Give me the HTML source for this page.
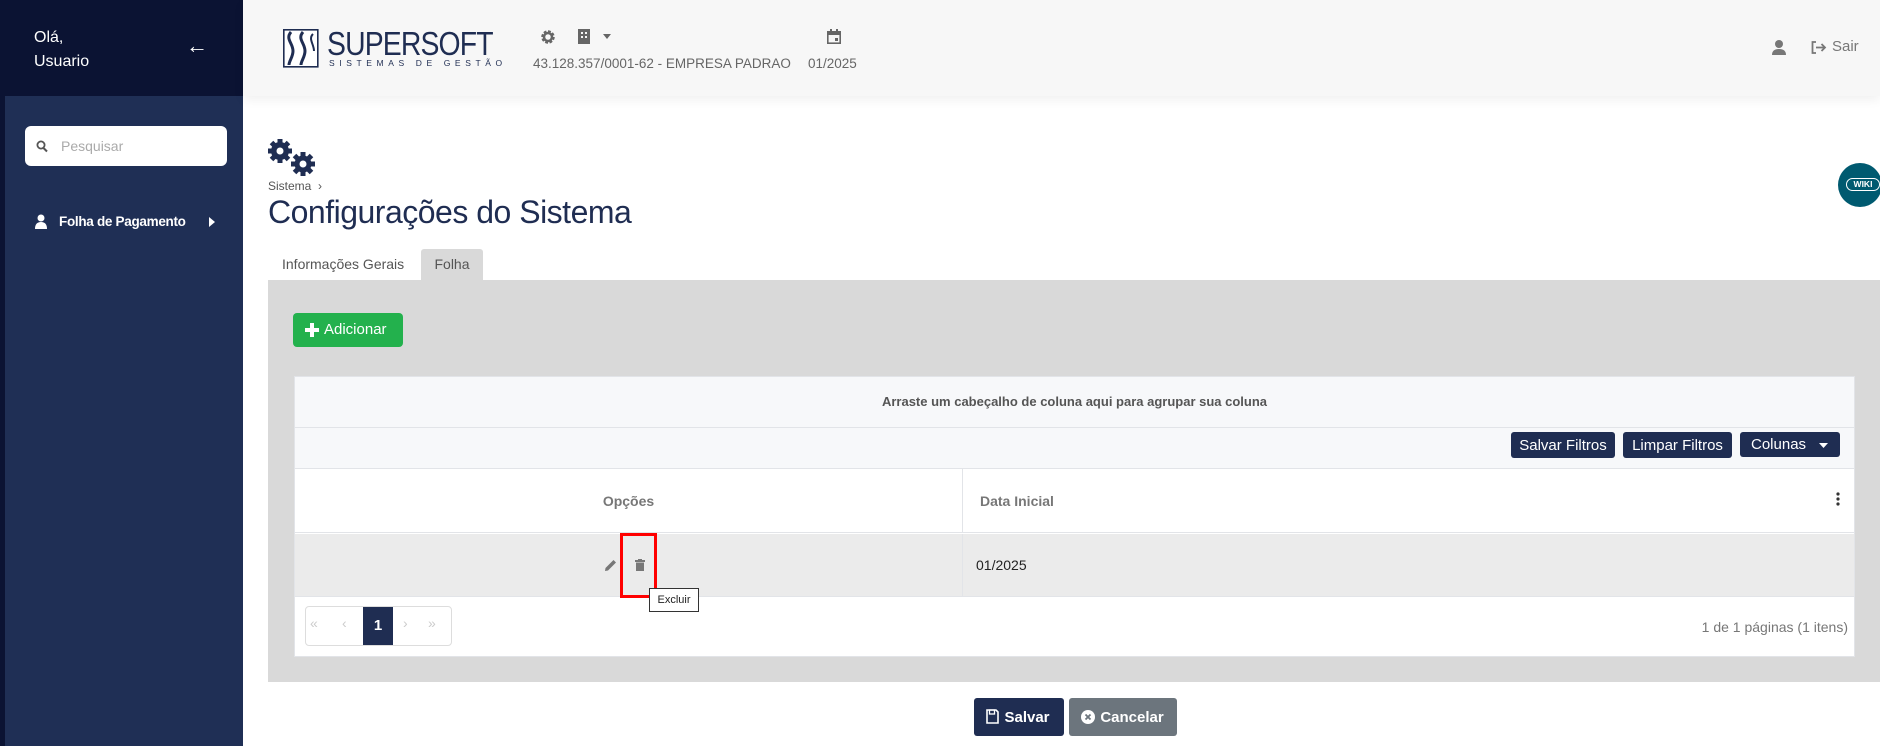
<!DOCTYPE html>
<html><head><meta charset="utf-8"><style>
*{margin:0;padding:0;box-sizing:border-box}
body{width:1880px;height:746px;overflow:hidden;background:#fff;font-family:"Liberation Sans",sans-serif;position:relative}
.a{position:absolute}
.btn{position:absolute;background:#1f2d52;color:#fff;border-radius:3px;font-size:15px;display:flex;align-items:center;justify-content:center}
</style></head><body>
<!-- sidebar -->
<div class="a" style="left:0;top:0;width:243px;height:746px;background:#1f2f55"></div>
<div class="a" style="left:0;top:0;width:243px;height:96px;background:#0b1333"></div>
<div class="a" style="left:0;top:96px;width:5px;height:650px;background:#0b1333"></div>
<div class="a" style="left:34px;top:26px;color:#fff;font-size:16px;line-height:24px">Olá,<br>Usuario</div>
<div class="a" style="left:186px;top:33px;color:#fff;font-size:22px;font-weight:bold">&#8592;</div>
<div class="a" style="left:25px;top:126px;width:202px;height:40px;background:#fff;border-radius:6px"></div>
<svg class="a" style="left:36px;top:140px" width="12" height="13" viewBox="0 0 12 13"><circle cx="5" cy="5" r="3.6" fill="none" stroke="#555" stroke-width="1.8"/><path d="M7.5 8 L11 11.5" stroke="#555" stroke-width="2"/></svg>
<div class="a" style="left:61px;top:138px;font-size:14px;color:#aaa">Pesquisar</div>
<svg class="a" style="left:35px;top:214px" width="12" height="15" viewBox="0 0 12 15"><circle cx="6" cy="4" r="3.5" fill="#fff"/><path d="M0 15 Q0 8 6 8 Q12 8 12 15Z" fill="#fff"/></svg>
<div class="a" style="left:59px;top:214px;color:#fff;font-size:13.5px;font-weight:bold;letter-spacing:-0.3px">Folha de Pagamento</div>
<svg class="a" style="left:209px;top:217px" width="6" height="10"><path d="M0 0 L6 5 L0 10Z" fill="#fff"/></svg>
<!-- header -->
<div class="a" style="left:243px;top:0;width:1637px;height:96px;background:#f7f7f7;box-shadow:0 4px 10px rgba(0,0,0,0.06)"></div>
<svg class="a" style="left:283px;top:29px" width="36" height="39" viewBox="0 0 36 39"><rect x="0.8" y="0.8" width="34" height="37" fill="#fff" stroke="#1f2d52" stroke-width="1.6"/><path d="M8 3 C2 10 10 14 10 22 C10 28 6 32 6 36" stroke="#1f2d52" stroke-width="3" fill="none"/><path d="M20 3 C14 10 22 14 22 22 C22 28 18 32 18 36" stroke="#1f2d52" stroke-width="3" fill="none"/><path d="M30 5 C25 10 31 15 31 22" stroke="#1f2d52" stroke-width="2" fill="none"/></svg>
<div class="a" style="left:327px;top:26px;font-size:33px;line-height:36px;color:#1f2d52;letter-spacing:-1px;transform:scaleX(0.86);transform-origin:left">SUPERSOFT</div>
<div class="a" style="left:329px;top:58px;font-size:8.5px;color:#1f2d52;letter-spacing:4.6px">SISTEMAS DE GESTÃO</div>
<svg class="a" style="left:540px;top:29px" width="16" height="16" viewBox="0 0 16 16"><circle cx="8" cy="8" r="5" fill="none" stroke="#666" stroke-width="3.5" stroke-dasharray="2.5 1.4"/><circle cx="8" cy="8" r="4" fill="none" stroke="#666" stroke-width="2.5"/></svg>
<svg class="a" style="left:578px;top:29px" width="12" height="15"><rect x="0" y="0" width="12" height="15" fill="#666"/><rect x="3" y="3" width="2" height="2" fill="#f7f7f7"/><rect x="7" y="3" width="2" height="2" fill="#f7f7f7"/><rect x="3" y="7" width="2" height="2" fill="#f7f7f7"/><rect x="7" y="7" width="2" height="2" fill="#f7f7f7"/></svg>
<svg class="a" style="left:603px;top:34px" width="8" height="5"><path d="M0 0 L8 0 L4 5Z" fill="#666"/></svg>
<div class="a" style="left:533px;top:56px;font-size:13.5px;color:#666">43.128.357/0001-62 - EMPRESA PADRAO</div>
<svg class="a" style="left:827px;top:29px" width="14" height="15"><rect x="0.8" y="2.8" width="12.4" height="11.4" fill="none" stroke="#666" stroke-width="1.6"/><rect x="0" y="2" width="14" height="4" fill="#666"/><rect x="3" y="0" width="2" height="3" fill="#666"/><rect x="9" y="0" width="2" height="3" fill="#666"/><rect x="8" y="9" width="3" height="3" fill="#666"/></svg>
<div class="a" style="left:808px;top:56px;font-size:13.5px;color:#666">01/2025</div>
<svg class="a" style="left:1772px;top:40px" width="14" height="15"><circle cx="7" cy="4" r="4" fill="#777"/><path d="M0 15 Q0 9 7 9 Q14 9 14 15Z" fill="#777"/></svg>
<svg class="a" style="left:1811px;top:41px" width="16" height="13" viewBox="0 0 16 13"><path d="M5 1 H1.5 V12 H5" fill="none" stroke="#777" stroke-width="1.8"/><path d="M5 6.5 H14 M10.5 3 L14 6.5 L10.5 10" fill="none" stroke="#777" stroke-width="1.8"/></svg>
<div class="a" style="left:1832px;top:38px;font-size:15px;color:#777">Sair</div>
<!-- page title -->
<svg class="a" style="left:267px;top:138px" width="52" height="40" viewBox="0 0 52 40"><g fill="#1f2d52"><circle cx="13" cy="13" r="9"/><g stroke="#1f2d52" stroke-width="5"><path d="M13 1 V25 M1 13 H25 M4.5 4.5 L21.5 21.5 M21.5 4.5 L4.5 21.5"/></g><circle cx="13" cy="13" r="3.5" fill="#fff"/><circle cx="36" cy="26" r="8.5"/><g stroke="#1f2d52" stroke-width="5"><path d="M36 14 V38 M24 26 H48 M27.5 17.5 L44.5 34.5 M44.5 17.5 L27.5 34.5"/></g><circle cx="36" cy="26" r="3.5" fill="#fff"/></g></svg>
<div class="a" style="left:268px;top:179px;font-size:12px;color:#555">Sistema &nbsp;›</div>
<div class="a" style="left:268px;top:194px;font-size:32px;color:#1f2d52;letter-spacing:-0.5px">Configurações do Sistema</div>
<div class="a" style="left:1838px;top:163px;width:44px;height:44px;border-radius:50%;background:#005a70;overflow:hidden"><div class="a" style="left:8px;top:15px;width:34px;height:13px;border:1.5px solid #fff;border-radius:7px;color:#fff;font-size:8.5px;font-weight:bold;text-align:center;line-height:10px">WIKI</div></div>
<!-- tabs -->
<div class="a" style="left:282px;top:256px;font-size:14px;color:#555">Informações Gerais</div>
<div class="a" style="left:421px;top:249px;width:62px;height:32px;background:#d9d9d9;border-radius:3px 3px 0 0;font-size:14px;color:#555;text-align:center;line-height:30px">Folha</div>
<div class="a" style="left:268px;top:280px;width:1612px;height:402px;background:#d9d9d9"></div>
<div class="a" style="left:293px;top:313px;width:110px;height:34px;background:#23b14d;border-radius:4px;color:#fff;font-size:15px;line-height:34px;padding-left:31px">Adicionar</div>
<svg class="a" style="left:305px;top:323px" width="14" height="14"><path d="M7 0 V14 M0 7 H14" stroke="#fff" stroke-width="4"/></svg>
<!-- grid -->
<div class="a" style="left:294px;top:376px;width:1561px;height:281px;background:#fff;border:1px solid #e2e4e8"></div>
<div class="a" style="left:295px;top:377px;width:1559px;height:51px;background:#f7f8fa;border-bottom:1px solid #e2e4e8;text-align:center;line-height:50px;font-size:13px;color:#555;font-weight:bold">Arraste um cabeçalho de coluna aqui para agrupar sua coluna</div>
<div class="a" style="left:295px;top:428px;width:1559px;height:41px;background:#f7f8fa;border-bottom:1px solid #e2e4e8"></div>
<div class="btn" style="left:1511px;top:432px;width:104px;height:26px">Salvar Filtros</div>
<div class="btn" style="left:1623px;top:432px;width:109px;height:26px">Limpar Filtros</div>
<div class="btn" style="left:1740px;top:432px;width:100px;height:25px;justify-content:flex-start;padding-left:11px">Colunas</div>
<svg class="a" style="left:1819px;top:443px" width="9" height="5"><path d="M0 0 L9 0 L4.5 5Z" fill="#fff"/></svg>
<div class="a" style="left:295px;top:469px;width:668px;height:64px;border-right:1px solid #e2e4e8;border-bottom:1px solid #e2e4e8;text-align:center;line-height:64px;font-size:14px;color:#777;font-weight:bold">Opções</div>
<div class="a" style="left:963px;top:469px;width:891px;height:64px;border-bottom:1px solid #e2e4e8;line-height:64px;font-size:14px;color:#777;font-weight:bold;padding-left:17px">Data Inicial</div>
<svg class="a" style="left:1836px;top:492px" width="4" height="14"><circle cx="2" cy="2" r="1.6" fill="#333"/><circle cx="2" cy="7" r="1.6" fill="#333"/><circle cx="2" cy="12" r="1.6" fill="#333"/></svg>
<div class="a" style="left:295px;top:534px;width:1559px;height:63px;background:#ebebeb;border-bottom:1px solid #e2e4e8"></div>
<div class="a" style="left:962px;top:534px;width:1px;height:63px;background:#e2e4e8"></div>
<div class="a" style="left:976px;top:557px;font-size:14px;color:#222">01/2025</div>
<svg class="a" style="left:604px;top:559px" width="13" height="13" viewBox="0 0 13 13"><path d="M1 12 L1.5 9 L9.5 1 L12 3.5 L4 11.5Z" fill="#777"/></svg>
<svg class="a" style="left:635px;top:559px" width="10" height="12"><rect x="0" y="1" width="10" height="2" fill="#777"/><rect x="3" y="0" width="4" height="2" fill="#777"/><rect x="1" y="3.5" width="8" height="8.5" fill="#777"/></svg>
<div class="a" style="left:620px;top:533px;width:37px;height:65px;border:3px solid #f00"></div>
<div class="a" style="left:649px;top:588px;width:50px;height:24px;background:#fff;border:1px solid #333;font-size:11px;line-height:22px;text-align:center;color:#222">Excluir</div>
<div class="a" style="left:305px;top:606px;width:147px;height:40px;border:1px solid #ddd;border-radius:4px"></div>
<div class="a" style="left:363px;top:607px;width:30px;height:38px;background:#1f2d52;color:#fff;font-size:15px;font-weight:bold;text-align:center;line-height:38px">1</div>
<div class="a" style="left:310px;top:615px;font-size:14px;color:#ccc">«</div>
<div class="a" style="left:342px;top:615px;font-size:14px;color:#ccc">‹</div>
<div class="a" style="left:403px;top:615px;font-size:14px;color:#ccc">›</div>
<div class="a" style="left:428px;top:615px;font-size:14px;color:#ccc">»</div>
<div class="a" style="left:1700px;top:619px;width:148px;text-align:right;font-size:14px;color:#777">1 de 1 páginas (1 itens)</div>
<!-- footer buttons -->
<div class="btn" style="left:974px;top:698px;width:90px;height:38px;font-weight:bold;font-size:15px;padding-left:16px">Salvar</div>
<svg class="a" style="left:986px;top:709px" width="13" height="15"><path d="M1 1 H10 L12 3 V14 H1Z" fill="none" stroke="#fff" stroke-width="1.6"/><rect x="3.5" y="1" width="5" height="4" fill="none" stroke="#fff" stroke-width="1.3"/></svg>
<div class="btn" style="left:1069px;top:698px;width:108px;height:38px;background:#6c757d;font-weight:bold;font-size:15px;padding-left:18px">Cancelar</div>
<svg class="a" style="left:1081px;top:710px" width="14" height="14"><circle cx="7" cy="7" r="7" fill="#fff"/><path d="M4.5 4.5 L9.5 9.5 M9.5 4.5 L4.5 9.5" stroke="#6c757d" stroke-width="1.8"/></svg>
</body></html>
